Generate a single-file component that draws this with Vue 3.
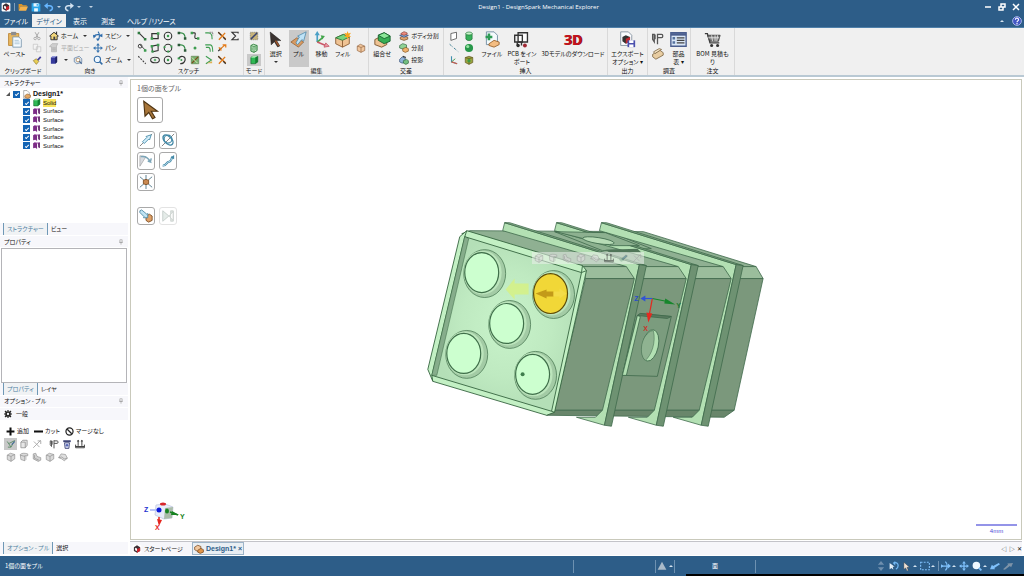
<template>
    <svg class="sprite" aria-hidden="true">
        <symbol id="logo" viewBox="0 0 16 16"><rect x="1" y="1" width="14" height="14" rx="2" fill="#fff" /><path d="M8 2l5 3v6l-5 3-5-3V5z" fill="#3d3036" /><path d="M8 8l5-2v5l-5 3z" fill="#c9232d" /><path d="M5 6l3 1v4l-3-1z" fill="#fff" /></symbol>
        <symbol id="folder" viewBox="0 0 16 16"><path d="M1 3h5l2 2h6v2H4l-3 6z" fill="#d9952b" /><path d="M4 7h12l-3 7H1z" fill="#f6b24b" /></symbol>
        <symbol id="save" viewBox="0 0 16 16"><path d="M1 2h12l2 2v11H1z" fill="#28a5ea" /><path d="M4 2h8v5H4zM5 10h6v5H5z" fill="#e8f6ff" /><path d="M9 3h2v3H9z" fill="#28a5ea" /></symbol>
        <symbol id="undo" viewBox="0 0 16 16"><path d="M3 6h6c6 0 6 7 0 8" fill="none" stroke="#67b6ff" stroke-width="2.4" /><path d="M6 1v10L0 6z" fill="#67b6ff" /></symbol>
        <symbol id="redo" viewBox="0 0 16 16"><path d="M12 6H7c-6 0-6 7 0 8" fill="none" stroke="#d3e2f0" stroke-width="2.4" /><path d="M10 1v10l6-5z" fill="#d3e2f0" /></symbol>
        <symbol id="paste" viewBox="0 0 18 20"><path d="M2 3h12v14H2z" fill="#e9b75d" stroke="#b98535" /><path d="M5 1h6v4H5z" fill="#8d8d8d" /><path d="M7 7h7l3 3v9H7z" fill="#f5fbff" stroke="#7896ac" /><path d="M9 11h5M9 13h6M9 15h6" stroke="#a5c0d3" /></symbol>
        <symbol id="cut" viewBox="0 0 16 16"><path d="M5 2l5 9M11 2L6 11" stroke="#aaa" stroke-width="1.6" /><circle cx="5" cy="12" r="2" fill="none" stroke="#aaa" stroke-width="1.5" /><circle cx="11" cy="12" r="2" fill="none" stroke="#aaa" stroke-width="1.5" /></symbol>
        <symbol id="copy" viewBox="0 0 16 16"><path d="M2 2h7v8H2zM7 6h7v8H7z" fill="#f4f4f4" stroke="#bdbdbd" /></symbol>
        <symbol id="brush" viewBox="0 0 16 16"><path d="M2 9l5-3 4 4-4 5z" fill="#e8cf55" stroke="#8a7430" /><path d="M8 7l5-5 2 2-5 5z" fill="#49459b" /></symbol>
        <symbol id="home" viewBox="0 0 16 16"><path d="M1 8l7-6 7 6h-2v6H3V8z" fill="#f3d77b" stroke="#333" stroke-width="1.5" /><path d="M7 9h3v5H7z" fill="#444" /><path d="M11 1h2v4h-2z" fill="#333" /></symbol>
        <symbol id="plan" viewBox="0 0 16 16"><path d="M2 4l3-3h9l-2 4v9H4V6H1z" fill="#cfcfcf" stroke="#aaa" /><path d="M5 8h6M5 11h6" stroke="#999" /></symbol>
        <symbol id="cubeBlue" viewBox="0 0 16 16"><path d="M3 4l3-2h7v9l-3 3H3z" fill="#353a9c" /><path d="M3 4l3-2h7l-3 2z" fill="#a5abe8" /><path d="M10 4l3-2v9l-3 3z" fill="#1d215f" /></symbol>
        <symbol id="viewer" viewBox="0 0 16 16"><path d="M2 5l8-3 4 4v6l-8 2-4-3z" fill="#d9e6f2" stroke="#4c6a92" /><circle cx="8" cy="8" r="3" fill="#fff" stroke="#a06a28" /><path d="M10 10l4 4" stroke="#4c6a92" stroke-width="2" /></symbol>
        <symbol id="spin" viewBox="0 0 16 16"><path d="M8 1c3 3 3 11 0 14M1 9c3-4 10-4 13-1" fill="none" stroke="#2e6cab" stroke-width="1.8" /><path d="M15 4v6l-5-2zM0 6l5 2-4 4zM5 12h5l-3 4z" fill="#2e6cab" /></symbol>
        <symbol id="pan" viewBox="0 0 16 16"><path d="M8 2v12M2 8h12" stroke="#3c77b1" stroke-width="1.8" /><path d="M8 0l3 4H5zM8 16l-3-4h6zM0 8l4-3v6zM16 8l-4 3V5z" fill="#3c77b1" /></symbol>
        <symbol id="zoom" viewBox="0 0 16 16"><circle cx="7" cy="7" r="5" fill="#eef7ff" stroke="#336ca5" stroke-width="1.8" /><path d="M11 11l4 4" stroke="#336ca5" stroke-width="2.4" /></symbol>
        <symbol id="line" viewBox="0 0 16 16"><path d="M3 3l10 10" stroke="#333" stroke-width="1.7" /><path d="M1 1h4v4H1zM11 11h4v4h-4z" fill="#2f7a40" /></symbol>
        <symbol id="rect" viewBox="0 0 16 16"><path d="M3 4h10v8H3z" fill="none" stroke="#333" stroke-width="2" /><path d="M1 10h4v4H1zM11 2h4v4h-4z" fill="#3d9d50" /></symbol>
        <symbol id="circle" viewBox="0 0 16 16"><circle cx="8" cy="8" r="6" fill="none" stroke="#333" stroke-width="1.8" /><circle cx="8" cy="8" r="2" fill="#3d9d50" /></symbol>
        <symbol id="arcT" viewBox="0 0 16 16"><path d="M2 3h4c5 0 7 4 7 9" fill="none" stroke="#2f8a43" stroke-width="1.8" /><path d="M1 1h4v4H1zM11 10h4v4h-4z" fill="#2b5a38" /></symbol>
        <symbol id="spline" viewBox="0 0 16 16"><path d="M2 3h5c4 0-2 8 2 9h5" fill="none" stroke="#333" stroke-width="1.7" /><path d="M1 1h4v4H1zM11 10h4v4h-4z" fill="#3d9d50" /></symbol>
        <symbol id="fillet" viewBox="0 0 16 16"><path d="M2 3h5c5 0 6 3 6 10" fill="none" stroke="#3d9d50" stroke-width="1.8" /><path d="M9 2h5v5" fill="none" stroke="#333" stroke-dasharray="2 1" /></symbol>
        <symbol id="trim" viewBox="0 0 16 16"><path d="M2 2l12 11M13 3L3 14" stroke="#e37c1b" stroke-width="2.2" /><path d="M2 2l5 5M10 10l4 4" stroke="#333" stroke-width="1.8" /></symbol>
        <symbol id="sigma" viewBox="0 0 16 16"><path d="M13 4V2H3l6 6-6 6h10v-2" fill="none" stroke="#333" stroke-width="1.7" /></symbol>
        <symbol id="tangent" viewBox="0 0 16 16"><circle cx="5" cy="5" r="3" fill="none" stroke="#444" stroke-width="1.6" /><path d="M4 2l10 10" stroke="#444" stroke-width="1.6" /><path d="M11 10h4v4h-4z" fill="#3d9d50" /></symbol>
        <symbol id="rect3" viewBox="0 0 16 16"><path d="M3 5l10-2v9L4 14z" fill="none" stroke="#333" stroke-width="1.7" /><path d="M1 3h4v4H1zM2 12h4v3H2zM11 1h4v4h-4z" fill="#3d9d50" /></symbol>
        <symbol id="circle3" viewBox="0 0 16 16"><circle cx="8" cy="8" r="6" fill="none" stroke="#333" stroke-width="1.7" /><path d="M1 5h3v3H1zM12 4h3v3h-3zM7 12h3v3H7z" fill="#3d9d50" /></symbol>
        <symbol id="point" viewBox="0 0 16 16"><circle cx="8" cy="8" r="2.4" fill="#3d9d50" /></symbol>
        <symbol id="offset" viewBox="0 0 16 16"><path d="M2 3h8c3 0 4 2 4 11M3 7h4c2 0 3 2 3 7" fill="none" stroke="#3d9d50" stroke-width="1.7" /></symbol>
        <symbol id="extend" viewBox="0 0 16 16"><path d="M2 13l5-5" stroke="#333" stroke-width="2" /><path d="M6 9l7-6M9 3h5v4M3 7l4 5" stroke="#e37c1b" stroke-width="2" fill="none" /></symbol>
        <symbol id="dashed" viewBox="0 0 16 16"><path d="M2 2l12 12" stroke="#444" stroke-width="1.8" stroke-dasharray="3 2" /></symbol>
        <symbol id="ellipse" viewBox="0 0 16 16"><ellipse cx="8" cy="8" rx="7" ry="4.5" fill="none" stroke="#333" stroke-width="1.7" /><path d="M6 8h4M8 6v4" stroke="#3d9d50" stroke-width="1.5" /></symbol>
        <symbol id="arcC" viewBox="0 0 16 16"><path d="M3 5c3-5 11-3 10 3-1 4-4 6-8 6" fill="none" stroke="#333" stroke-width="1.8" /><circle cx="7" cy="8" r="1.6" fill="#3d9d50" /><path d="M1 4h4v3H1z" fill="#3d9d50" /></symbol>
        <symbol id="project" viewBox="0 0 16 16"><path d="M2 2h12v12H2z" fill="#79af6c" stroke="#5b7f4e" /><path d="M3 13L13 3" stroke="#7b4a1b" stroke-width="2" /><path d="M3 4l9 9" stroke="#d7eabf" stroke-width="1.5" /></symbol>
        <symbol id="bend" viewBox="0 0 16 16"><path d="M3 2l9 6-9 6" fill="none" stroke="#3d9d50" stroke-width="1.7" /><path d="M4 13l9-3v3z" fill="#dfb153" /></symbol>
        <symbol id="modeSketch" viewBox="0 0 16 16"><path d="M2 2h12v12H2z" fill="#c7b37a" stroke="#777" stroke-dasharray="2 1" /><path d="M3 13L13 3" stroke="#39436f" stroke-width="2.4" /></symbol>
        <symbol id="modeSection" viewBox="0 0 16 16"><path d="M3 4l4-2 6 2v8l-5 3-5-2z" fill="#bfe6c2" stroke="#2a7b37" stroke-width="1.4" /><path d="M3 4l5 2 5-2M8 6v9M5 7v5M11 6v5" stroke="#2a7b37" fill="none" /></symbol>
        <symbol id="solid" viewBox="0 0 16 16"><path d="M3 4l3-2h8v9l-4 3H3z" fill="#2fb854" stroke="#0f6327" /><path d="M3 4l3-2h8l-4 2z" fill="#d4ffd5" /><path d="M10 4l4-2v9l-4 3z" fill="#147f30" /></symbol>
        <symbol id="cursor" viewBox="0 0 16 16"><path d="M3 1l10 8H9l3 5-2 1-3-5-3 3z" fill="#3a3330" stroke="#1f1a18" stroke-width=".5" /><path d="M8 9l3 5" stroke="#a35529" stroke-width="1.3" /></symbol>
        <symbol id="cursorGold" viewBox="0 0 16 16"><path d="M3 1l11 8H9l3 5-2 1-3-5-3 3z" fill="#a8763a" stroke="#4f3412" stroke-width=".9" /></symbol>
        <symbol id="pull" viewBox="0 0 20 20"><path d="M1 13l7-5 8 5-6 6z" fill="#d79a62" stroke="#8d5a2c" stroke-width=".8" /><path d="M7 14l4-7-2-1 10-5-3 11-2-2-5 6z" fill="#bfe3f7" stroke="#4a86a8" stroke-width=".9" /></symbol>
        <symbol id="move" viewBox="0 0 20 20"><path d="M5 13V3" stroke="#4ba0c6" stroke-width="2" /><path d="M5 0l3 5H2z" fill="#4ba0c6" /><path d="M5 13l6-5" stroke="#43a54b" stroke-width="2" /><path d="M9 5l5 1-3 4z" fill="#43a54b" /><path d="M5 13l10 4" stroke="#c9596a" stroke-width="2" /><path d="M19 18l-6 1 2-5z" fill="#e79aa5" stroke="#c9596a" /></symbol>
        <symbol id="fill" viewBox="0 0 20 20"><path d="M2 8l9-4 7 3v8l-8 4-8-4z" fill="#efc394" stroke="#85562d" /><path d="M2 8l9-4 7 3-8 4z" fill="#77d57e" stroke="#25773a" /><path d="M10 11v8" stroke="#85562d" /><path d="M16 0l1 3 3-1-2 3 2 2-3 0-1 3-1-3-3 0 2-2-2-3 3 1z" fill="#f8a51e" /></symbol>
        <symbol id="box" viewBox="0 0 16 16"><path d="M2 5l5-3 7 3v7l-6 3-6-3z" fill="#f1c79e" stroke="#8c5d38" /><path d="M2 5l6 2 6-2M8 7v8" fill="none" stroke="#8c5d38" /></symbol>
        <symbol id="combine" viewBox="0 0 20 20"><path d="M1 10l6-3 8 3v6l-6 3-8-3z" fill="#efc394" stroke="#754c22" /><path d="M5 5l7-3 7 4v6l-7 3-7-4z" fill="#37ae55" stroke="#155f2a" /><path d="M5 5l7-3 7 4-7 3z" fill="#8be698" stroke="#155f2a" /></symbol>
        <symbol id="splitBody" viewBox="0 0 16 16"><path d="M2 10l5-2 7 2v3l-6 2-6-2z" fill="#e0a56f" stroke="#654321" /><path d="M1 7l7-2 7 2-7 3z" fill="#7cb8e8" stroke="#336" /><path d="M3 4l5-3 5 2v2l-5 2-5-2z" fill="#ee8b7e" stroke="#7c3a33" /></symbol>
        <symbol id="split" viewBox="0 0 16 16"><path d="M1 4l5-3 6 2v5l-5 2-6-2z" fill="#8fd295" stroke="#285f36" /><path d="M6 9l5-2 4 2v4l-5 2-4-2z" fill="#f0b26c" stroke="#7c501e" /></symbol>
        <symbol id="projectTo" viewBox="0 0 16 16"><path d="M1 7l4-4 5 2v6l-5 2-4-2z" fill="#8fb3d9" stroke="#2b4770" /><path d="M7 9l5-2 3 2v4l-4 2-4-2z" fill="#74bf80" stroke="#285f36" /><path d="M6 2l5 2" stroke="#333" stroke-width="2" /></symbol>
        <symbol id="plane" viewBox="0 0 16 16"><path d="M3 4l9-2v10l-9 3z" fill="#fff" stroke="#444" stroke-width="1.2" /></symbol>
        <symbol id="cyl" viewBox="0 0 16 16"><path d="M3 4v9c2 3 8 3 10 0V4z" fill="#38b05a" stroke="#176b2e" /><ellipse cx="8" cy="4" rx="5" ry="2.4" fill="#c8f6ca" stroke="#176b2e" /></symbol>
        <symbol id="centerline" viewBox="0 0 16 16"><path d="M1 2l14 12" stroke="#367a8e" stroke-width="1.5" stroke-dasharray="4 2 1 2" /></symbol>
        <symbol id="sphere" viewBox="0 0 16 16"><circle cx="8" cy="8" r="6.5" fill="#27974a" /><circle cx="6" cy="5.5" r="2.5" fill="#98e3a4" /></symbol>
        <symbol id="origin" viewBox="0 0 16 16"><path d="M4 2v9l9 3" fill="none" stroke="#3e8fae" stroke-width="1.8" /><path d="M4 11l6-5" stroke="#3f9b4e" stroke-width="1.5" /><path d="M4 11l9 3" stroke="#cb5c4b" stroke-width="1.8" /></symbol>
        <symbol id="shell" viewBox="0 0 16 16"><path d="M2 4l6-2 6 2v8l-6 3-6-3z" fill="#9aa33f" stroke="#58501b" /><path d="M2 4l6 2 6-2M8 6v9" stroke="#58501b" fill="none" /><circle cx="8" cy="9" r="2.5" fill="#3c9b45" /></symbol>
        <symbol id="file" viewBox="0 0 20 20"><path d="M4 1h9l4 4v11H4z" fill="#f5fafd" stroke="#67879c" /><path d="M7 3v8M3 7h8" stroke="#2e9b56" stroke-width="3" /><path d="M7 15l6-4 6 2v3l-6 3-6-2z" fill="#f4bd82" stroke="#95602c" /></symbol>
        <symbol id="pcb" viewBox="0 0 20 20"><path d="M6 2h11v11H6z" fill="#fff" stroke="#333" stroke-width="1.6" /><path d="M2 5h9v8H2zM5 13v4M10 13v4" fill="none" stroke="#333" stroke-width="1.6" /><circle cx="6" cy="17" r="2" fill="#2d2d2d" /><circle cx="14" cy="17" r="2.3" fill="#9e2732" /></symbol>
        <symbol id="export" viewBox="0 0 20 20"><path d="M2 1h9l4 4v12H2z" fill="#fbfdff" stroke="#7e8c99" /><path d="M8 5l5 2v5l-5 3-4-3V7z" fill="#333" /><path d="M8 9l5-2v5l-5 3z" fill="#c1272d" /><path d="M10 11h9v8h-9z" fill="#4b50ae" /><path d="M12 11h5v3h-5zM12 16h5v3h-5z" fill="#fff" /></symbol>
        <symbol id="caliper" viewBox="0 0 16 16"><path d="M2 3v6l2 3V3zM5 3v6M8 2v13M8 3h5c2 0 2 4 0 4H8" fill="none" stroke="#565656" stroke-width="1.6" /></symbol>
        <symbol id="mass" viewBox="0 0 16 16"><path d="M2 9l9-5 4 3v3l-9 5-4-3z" fill="#e8cda2" stroke="#7b6543" /><path d="M3 6l7-4 3 1-8 5z" fill="#f6e5c5" stroke="#7b6543" /></symbol>
        <symbol id="bom" viewBox="0 0 20 20"><path d="M1 2h18v16H1z" fill="#d9e6f6" stroke="#4b5e8e" stroke-width="1.6" /><path d="M1 4h18" stroke="#4b5e8e" stroke-width="3" /><path d="M8 8h9M8 11h9M8 14h9" stroke="#444" stroke-width="1.4" /><path d="M3 7h3v3H3zM3 12h3v3H3z" fill="#55729e" /></symbol>
        <symbol id="cart" viewBox="0 0 20 20"><path d="M1 3h3l3 11h11" fill="none" stroke="#3c3c3c" stroke-width="1.5" /><path d="M4 5h15l-2 7H7z" fill="#7b7b7b" stroke="#3c3c3c" /><path d="M5 8h13M9 5l1 7M13 5v7M16 5l-1 7" stroke="#e9e9e9" /><circle cx="9" cy="17" r="1.8" fill="#333" /><circle cx="16" cy="17" r="1.8" fill="#333" /></symbol>
        <symbol id="help" viewBox="0 0 16 16"><circle cx="8" cy="8" r="7" fill="#4357c4" stroke="#b4bff0" stroke-width="1.4" /><path d="M5.5 6c0-4 5-3 5 0 0 2-2.5 1.500-2.5 4M8 11v2" fill="none" stroke="#fff" stroke-width="1.8" /></symbol>
        <symbol id="pin" viewBox="0 0 16 16"><path d="M5 2h6v7H5zM3 9h10M8 9v6" fill="none" stroke="#999" stroke-width="1.6" /></symbol>
        <symbol id="doc" viewBox="0 0 16 16"><path d="M3 1h6l4 4v10H3z" fill="#fff" stroke="#777" /><path d="M5 10l4-3 6 2v4l-5 2-5-2z" fill="#e5a864" stroke="#875a2d" /></symbol>
        <symbol id="part" viewBox="0 0 16 16"><path d="M1 5l5-3 5 2v5l-5 3-5-3z" fill="#f1c79e" stroke="#7a4a20" stroke-width="1.2" /><path d="M6 10l5-3 4 2v4l-5 2-4-2z" fill="#e0954a" stroke="#7a4a20" stroke-width="1.2" /></symbol>
        <symbol id="surface" viewBox="0 0 16 16"><path d="M2 4l3-2 4 1v11l-3-2-4 1z" fill="#7d2c86" /><path d="M9 3l5-1v11l-3-2V6z" fill="#5d1b67" /><path d="M5 2l4 1 5-1-4 3z" fill="#d298d8" /></symbol>
        <symbol id="dirPull" viewBox="0 0 16 16"><path d="M1 15L15 1" stroke="#777" /><path d="M4 10l5-5-1-1 6-2-2 6-1-1-5 5z" fill="#d5effb" stroke="#4389a7" /></symbol>
        <symbol id="revolve" viewBox="0 0 16 16"><path d="M1 15L15 1" stroke="#777" /><ellipse cx="8" cy="8" rx="7" ry="4" transform="rotate(45 8 8)" fill="none" stroke="#4389a7" stroke-width="1.7" /><circle cx="8" cy="7" r="4.5" fill="none" stroke="#4389a7" stroke-width="1.4" /></symbol>
        <symbol id="draft" viewBox="0 0 16 16"><path d="M1 2v12L8 3z" fill="#d8dbe0" stroke="#999" stroke-width=".7" /><path d="M2 3c6-1 9 2 11 6l-3-1M13 9l1-4" fill="none" stroke="#7ba5b8" stroke-width="1.7" /></symbol>
        <symbol id="sweep" viewBox="0 0 16 16"><path d="M2 13c4 1 4-4 7-4 2 0 3-3 4-6" fill="none" stroke="#4389a7" stroke-width="2.4" /><path d="M2 13c4 1 4-4 7-4 2 0 3-3 4-6" fill="none" stroke="#d5effb" stroke-width=".9" /><path d="M15 1v5l-4-2z" fill="#4389a7" /></symbol>
        <symbol id="scale" viewBox="0 0 16 16"><path d="M1 2l14 12M15 2L1 14M8 0v16" stroke="#5b7f91" stroke-width="1.1" /><path d="M5 6l3-1 3 1v4l-3 1-3-1z" fill="#ca8951" stroke="#7d4d22" /></symbol>
        <symbol id="upTo" viewBox="0 0 16 16"><path d="M8 8l4-2 3 2v5l-4 2-3-2z" fill="#dea169" stroke="#7d4d22" /><path d="M1 2l2-1 6 5 1-1v5H5l1-1-5-5z" fill="#bfe3f2" stroke="#3f7e9a" stroke-width=".9" /></symbol>
        <symbol id="finish" viewBox="0 0 16 16"><path d="M2 2v12l7-6z" fill="#e5ece9" stroke="#c4cdc9" /><path d="M14 3l-5 5 5 5zM11 2h3v12h-3z" fill="#dce3e0" stroke="#c8cfcc" stroke-width=".8" /></symbol>
        <symbol id="gear" viewBox="0 0 16 16"><circle cx="8" cy="8" r="4" fill="none" stroke="#222" stroke-width="3.4" /><path d="M8 0v3M8 13v3M0 8h3M13 8h3M2 2l3 3M11 11l3 3M14 2l-3 3M5 11l-3 3" stroke="#222" stroke-width="2.4" /></symbol>
        <symbol id="plus" viewBox="0 0 16 16"><path d="M8 1v14M1 8h14" stroke="#111" stroke-width="3.6" /></symbol>
        <symbol id="minus" viewBox="0 0 16 16"><path d="M0 8h16" stroke="#111" stroke-width="3.6" /></symbol>
        <symbol id="none" viewBox="0 0 16 16"><circle cx="8" cy="8" r="6.3" fill="none" stroke="#222" stroke-width="2.2" /><path d="M4 4l8 8" stroke="#222" stroke-width="2.2" /></symbol>
        <symbol id="optPull" viewBox="0 0 16 16"><path d="M2 4l6 9 6-11M5 7l8-4M3 13h5" fill="none" stroke="#5c8b66" stroke-width="1.5" /><path d="M9 9l5-5" stroke="#4b6f9d" stroke-width="1.7" /></symbol>
        <symbol id="optBox" viewBox="0 0 16 16"><path d="M3 5h7v9H3zM3 5l3-3h7v8l-3 4" fill="#e7e7e7" stroke="#949494" stroke-width="1.3" /></symbol>
        <symbol id="optArrow" viewBox="0 0 16 16"><path d="M2 14L14 2M3 4l9 9M9 3h5v5" fill="none" stroke="#a5a5a5" stroke-width="1.4" /></symbol>
        <symbol id="bin" viewBox="0 0 16 16"><path d="M2 2h12v3H2z" fill="#3f4576" /><path d="M4 6h8l-1 9H5z" fill="#d6dcf4" stroke="#3f4576" stroke-width="1.4" /><circle cx="8" cy="10" r="2" fill="#5867b4" /></symbol>
        <symbol id="ruler" viewBox="0 0 16 16"><path d="M1 9v5h14V9M5 2v9M11 2v9M1 12h14" fill="none" stroke="#383838" stroke-width="1.5" /><path d="M3 4l2-3 2 3zM9 4l2-3 2 3z" fill="#383838" /></symbol>
        <symbol id="grayBox" viewBox="0 0 16 16"><path d="M2 5l5-3 7 2v7l-6 4-6-3z" fill="#dadada" stroke="#8b8b8b" /><path d="M2 5l6 2 6-3M8 7v8" fill="none" stroke="#8b8b8b" /></symbol>
        <symbol id="grayRound" viewBox="0 0 16 16"><path d="M2 4c3-3 8-2 12-1v3H9v8l-6-2z" fill="#dadada" stroke="#8b8b8b" /><path d="M2 5l7 2M11 6v6l-2 2" fill="none" stroke="#8b8b8b" /></symbol>
        <symbol id="grayStep" viewBox="0 0 16 16"><path d="M2 3l4-1 2 5 6 2v4l-4 2-8-4z" fill="#d2d2d2" stroke="#8b8b8b" /><path d="M4 5v5l7 3" fill="none" stroke="#8b8b8b" /></symbol>
        <symbol id="grayDome" viewBox="0 0 16 16"><path d="M1 9l4-6 7 1 3 6-5 4-4-3z" fill="#dedede" stroke="#8b8b8b" /><path d="M1 9l5-1 4 3 5-1" fill="none" stroke="#8b8b8b" /></symbol>
        <symbol id="pick" viewBox="0 0 16 16"><path d="M1 10l5-2 4 4-5 2z" fill="#8db59a" /><path d="M6 9l7-6 2 2-7 6z" fill="#467f92" stroke="#333" stroke-width=".6" /></symbol>
        <symbol id="sbCursor" viewBox="0 0 16 16"><path d="M3 2l9 8H8l2 5-2 1-2-5-3 2z" fill="#f1e3d6" stroke="#333" stroke-width=".6" /></symbol>
        <symbol id="sbCursorBack" viewBox="0 0 16 16"><path d="M1 3l8 6H6l1 5-3-3-3 2z" fill="#e3edf5" /><path d="M9 3c7-2 7 8 2 10" fill="none" stroke="#72b7f2" stroke-width="2" /><path d="M10 0v7L6 3z" fill="#72b7f2" /></symbol>
        <symbol id="sbBox" viewBox="0 0 16 16"><path d="M1 2h14v12H1z" fill="none" stroke="#7fc0fa" stroke-width="1.8" stroke-dasharray="3 2" /></symbol>
        <symbol id="sbSpin" viewBox="0 0 16 16"><path d="M7 1c4 4 4 10 0 14M1 8h12" fill="none" stroke="#7fc0fa" stroke-width="2" /><path d="M16 8l-5 4V4zM0 5l4 3-4 3z" fill="#7fc0fa" /></symbol>
        <symbol id="sbPan" viewBox="0 0 16 16"><path d="M8 2v12M2 8h12" stroke="#7fc0fa" stroke-width="2" /><path d="M8 0l3 4H5zM8 16l-3-4h6zM0 8l4-3v6zM16 8l-4 3V5z" fill="#7fc0fa" /></symbol>
        <symbol id="sbZoom" viewBox="0 0 16 16"><circle cx="7" cy="7" r="6" fill="#eef8ff" /><path d="M11 11l4 4" stroke="#7fc0fa" stroke-width="3" /></symbol>
        <symbol id="sbPrev" viewBox="0 0 16 16"><path d="M0 13l3-7 2 2 9-5 2 2-9 6 1 2z" fill="#7fc0fa" /></symbol>
        <symbol id="sbNext" viewBox="0 0 16 16"><path d="M16 3l-3 7-2-2-8 6-3-1 8-7-1-2z" fill="#7d93a8" /></symbol>
        <symbol id="sbUpDown" viewBox="0 0 16 16"><path d="M8 0l5 6H3zM8 16l-5-6h10z" fill="#6f8fae" /></symbol>
        <symbol id="warn" viewBox="0 0 16 16"><path d="M8 1l7 13H1z" fill="#a9bac9" /></symbol>
    </svg>

    <div class="window">
        <header class="head">
            <div class="titlebar">
                <div class="quick">
                    <Icon name="logo" />
                    <i class="bar"></i>
                    <button aria-label="open"><Icon name="folder" /></button>
                    <button aria-label="save"><Icon name="save" /></button>
                    <button aria-label="undo"><Icon name="undo" /><i class="down"></i></button>
                    <button aria-label="redo"><Icon name="redo" /><i class="down"></i></button>
                    <button class="more" aria-label="customize"><i class="down"></i></button>
                </div>
                <h1>Design1 - DesignSpark Mechanical Explorer</h1>
                <div class="winbtns">
                    <button aria-label="minimize"><svg viewBox="0 0 8 8"><path d="M1 4h6" /></svg></button>
                    <button aria-label="restore"><svg viewBox="0 0 8 8"><path d="M3 1h4v3H3zM1 4h4v3H1z" /></svg></button>
                    <button aria-label="close"><svg viewBox="0 0 8 8"><path d="M1 1l6 6M7 1L1 7" /></svg></button>
                </div>
            </div>
            <nav class="menu">
                <button v-for="m in menus" :key="m" :class="{ active: m === activeMenu }" @click="activeMenu = m">{{ m }}</button>
                <span class="menu-right"><i class="up"></i><button aria-label="help"><Icon name="help" /></button></span>
            </nav>
        </header>

        <div class="ribbon">
            <section class="group g-clip">
                <div class="tools">
                    <BigButton icon="paste" :lines="['ペースト']" />
                    <div class="col"><button v-for="i in ['cut', 'copy', 'brush']" :key="i" :aria-label="i"><Icon :name="i" /></button></div>
                </div>
                <h2>クリップボード</h2>
            </section>
            <section class="group g-orient">
                <div class="tools">
                    <div class="col left">
                        <button><Icon name="home" />ホーム<i class="down"></i></button>
                        <button disabled><Icon name="plan" />平面ビュー</button>
                        <span class="pair"><button aria-label="view"><Icon name="cubeBlue" /><i class="down"></i></button><button aria-label="viewer"><Icon name="viewer" /></button></span>
                    </div>
                    <div class="col left">
                        <button><Icon name="spin" />スピン<i class="down"></i></button>
                        <button><Icon name="pan" />パン</button>
                        <button><Icon name="zoom" />ズーム<i class="down"></i></button>
                    </div>
                </div>
                <h2>向き</h2>
            </section>
            <section class="group g-sketch">
                <div class="tools sketch">
                    <template v-for="(s, i) in sketch" :key="i">
                        <button v-if="s" :aria-label="s"><Icon :name="s" /></button>
                        <span v-else></span>
                    </template>
                </div>
                <h2>スケッチ</h2>
            </section>
            <section class="group g-mode">
                <div class="tools">
                    <div class="col">
                        <button v-for="m in modes" :key="m" :aria-label="m" :class="{ on: m === mode }" @click="mode = m"><Icon :name="m" /></button>
                    </div>
                </div>
                <h2>モード</h2>
            </section>
            <section class="group g-edit">
                <div class="tools">
                    <BigButton icon="cursor" :lines="['選択']" arrow />
                    <BigButton icon="pull" :lines="['プル']" class="on" />
                    <BigButton icon="move" :lines="['移動']" />
                    <BigButton icon="fill" :lines="['フィル']" />
                    <div class="col mid"><button aria-label="box"><Icon name="box" /></button></div>
                </div>
                <h2>編集</h2>
            </section>
            <section class="group g-cross">
                <div class="tools">
                    <BigButton icon="combine" :lines="['組合せ']" />
                    <div class="col left">
                        <button><Icon name="splitBody" />ボディ分割</button>
                        <button><Icon name="split" />分割</button>
                        <button><Icon name="projectTo" />投影</button>
                    </div>
                </div>
                <h2>交差</h2>
            </section>
            <section class="group g-insert">
                <div class="tools">
                    <div class="shapes"><button v-for="s in shapes" :key="s" :aria-label="s"><Icon :name="s" /></button></div>
                    <BigButton icon="file" :lines="['ファイル']" />
                    <BigButton icon="pcb" :lines="['PCB をイン', 'ポート']" />
                    <button class="big"><b class="logo3d">3D</b><span>3Dモデルのダウンロード</span></button>
                </div>
                <h2>挿入</h2>
            </section>
            <section class="group g-out">
                <div class="tools"><BigButton icon="export" :lines="['エクスポート', 'オプション ▾']" /></div>
                <h2>出力</h2>
            </section>
            <section class="group g-survey">
                <div class="tools">
                    <div class="col two"><button aria-label="caliper"><Icon name="caliper" /></button><button aria-label="mass"><Icon name="mass" /></button></div>
                    <BigButton icon="bom" :lines="['部品', '表 ▾']" />
                </div>
                <h2>調査</h2>
            </section>
            <section class="group g-order">
                <div class="tools"><BigButton icon="cart" :lines="['BOM 見積も', 'り']" /></div>
                <h2>注文</h2>
            </section>
        </div>

        <div class="body">
            <aside class="side">
                <section class="panel">
                    <h3>ストラクチャー<Icon name="pin" /></h3>
                    <div class="structure">
                        <ul class="tree">
                            <li class="root"><i class="twist"></i><label><input type="checkbox" checked /><Icon name="doc" /><b>Design1*</b></label></li>
                            <li v-for="(n, i) in nodes" :key="i"><label><input type="checkbox" v-model="n.shown" /><Icon :name="n.icon" /><span :class="{ picked: n.icon === 'solid' }">{{ n.name }}</span></label></li>
                        </ul>
                    </div>
                    <div class="tabs"><button class="active">ストラクチャー</button><button>ビュー</button></div>
                </section>
                <section class="panel">
                    <h3>プロパティ<Icon name="pin" /></h3>
                    <div class="props"></div>
                    <div class="tabs"><button class="active">プロパティ</button><button>レイヤ</button></div>
                </section>
                <section class="panel">
                    <h3>オプション - プル<Icon name="pin" /></h3>
                    <h4><Icon name="gear" />一般</h4>
                    <div class="options">
                        <div class="row merge">
                            <button><Icon name="plus" />追加</button>
                            <button><Icon name="minus" />カット</button>
                            <button><Icon name="none" />マージなし</button>
                        </div>
                        <div class="row">
                            <button v-for="o in optionsA" :key="o" :aria-label="o" :class="{ on: o === 'optPull', gap: o === 'caliper' }"><Icon :name="o" /></button>
                        </div>
                        <div class="row">
                            <button v-for="(o, i) in optionsB" :key="i" :aria-label="o"><Icon :name="o" /></button>
                        </div>
                    </div>
                    <div class="tabs"><button class="active">オプション - プル</button><button>選択</button></div>
                </section>
            </aside>

            <main class="main">
                <div class="canvas">
                    <svg class="model" viewBox="131 80 891 460">
                        <g stroke="#3f6a4b" stroke-width=".8" stroke-linejoin="round">
                            <path d="M462 234L470 231 644 232 757 267 583 267z" fill="#8fb092" />
                            <path d="M583 267H757L764 279H586z" fill="#9bbd9c" />
                            <path d="M586 279H764L735 411H555z" fill="#7b987c" />
                            <path d="M555 411H735L725 418 547 416z" fill="#69866b" />
                            <path d="M555 232L612 233 652 249 603 251z" fill="#8db190" />
                            <g v-for="f in fins" :key="f.x" :transform="`translate(${f.x} 0)`">
                                <path d="M505 223L503 231 627 267 635 279 603 411 596 418 577 418 605 426 640 265z" fill="#b3e0b3" />
                                <path d="M505 223L510 223 647 266 640 265z" fill="#89b08b" />
                                <path d="M640 265L647 266 612 427 605 426z" fill="#6e9272" />
                            </g>
                            <path d="M556 232L606 233 640 246 612 246z" fill="#8db190" />
                            <ellipse cx="599" cy="241" rx="16" ry="3" transform="rotate(9 599 241)" fill="#b6dbb5" />
                            <path d="M606 250L638 249 642 253H610z" fill="#4f7558" stroke="none" />
                            <path d="M638 316L641 314 672 317 658 377 623 376z" fill="#7b9c7e" />
                            <path d="M638 316L641 317 627 376 623 376z" fill="#b3e0b3" />
                            <path d="M638 316L641 314 672 317 668 319z" fill="#5a7b60" />
                            <ellipse cx="651" cy="346" rx="8" ry="16" transform="rotate(12 651 346)" fill="#b3e0b3" />
                            <path d="M654 331C641 334 639 356 646 361 652 356 657 343 654 331z" fill="#8fb391" stroke-width=".5" />
                        </g>
                        <g stroke="#35633f" stroke-width=".9" stroke-linejoin="round">
                            <path d="M460 237L467 231 583 266 587 271 555 413 547 416 433 382 428 370z" fill="#c3f0c4" />
                            <path d="M465 237L582 273 552 412 432 376z" fill="url(#face)" />
                            <path d="M465 237L469 239 437 376 432 376z" fill="#86ad8b" stroke-width=".5" />
                            <path d="M467 231L465 237M583 266L582 273M433 382L432 376M555 413L552 412M582 273L587 271" fill="none" />
                        </g>
                        <g v-for="(b, i) in bosses" :key="i" stroke="#3f6f4a">
                            <ellipse :cx="b.x + 3" :cy="b.y + 1" rx="21" ry="24" fill="#a3cba5" stroke-width=".7" />
                            <ellipse :cx="b.x + 1" :cy="b.y" rx="19" ry="22" fill="#bce5bc" stroke="none" />
                            <ellipse :cx="b.x" :cy="b.y" rx="17" ry="20" :fill="b.hot ? '#f1d737' : '#ccffcf'" :stroke="b.hot ? '#5e4c08' : '#3f6f4a'" stroke-width="1.2" />
                        </g>
                        <circle cx="523" cy="375" r="2" fill="#3f7d4d" />
                        <path d="M506 290L515 279V284H529V295H515V300z" fill="#d8f27c" opacity=".75" />
                        <path d="M536 294L547 290V292H554V297H547V299z" fill="#c39a19" />
                        <path d="M554 292H560V289L567 294 560 299V297H554z" fill="#f4dc48" />
                        <g stroke-width="1.2">
                            <path d="M653 299L668 302" stroke="#16862c" /><path d="M666 299L676 305 665 304z" fill="#16862c" />
                            <path d="M653 299L650 315" stroke="#e32a20" /><path d="M647 313L653 314 649 323z" fill="#e32a20" />
                            <path d="M653 299H645" stroke="#3153d5" /><path d="M641 299L646 296V302z" fill="#3153d5" />
                        </g>
                        <g class="letters">
                            <text x="635" y="301" fill="#2b4cc8">Z</text>
                            <text x="644" y="332" fill="#c7352b">X</text>
                            <text x="677" y="308" fill="#1f7a31">Y</text>
                        </g>
                        <defs>
                            <radialGradient id="face"><stop offset="0" stop-color="#c8f3ca" /><stop offset=".6" stop-color="#bfeac1" /><stop offset="1" stop-color="#b4dfb7" /></radialGradient>
                        </defs>
                    </svg>

                    <div class="palette">
                        <p>1個の面をプル</p>
                        <button class="select" aria-label="select"><Icon name="cursorGold" /></button>
                        <div class="guides">
                            <button v-for="g in guides" :key="g" :aria-label="g"><Icon :name="g" /></button>
                        </div>
                        <div class="guides">
                            <button aria-label="upTo"><Icon name="upTo" /></button>
                            <button aria-label="finish" disabled><Icon name="finish" /></button>
                        </div>
                    </div>

                    <div class="minibar">
                        <button v-for="(m, i) in mini" :key="i" :aria-label="m"><Icon :name="m" /></button>
                    </div>

                    <svg class="triad" viewBox="0 0 44 32">
                        <path d="M13 6L22 5 30 8 29 19 21 20 12 16z" fill="#e8ecf9" stroke="#b9c1dc" stroke-width=".7" />
                        <path d="M22 9L30 8 29 19 21 20z" fill="#a9bba9" />
                        <ellipse cx="20" cy="5" rx="3" ry="1.5" fill="#d7262b" />
                        <path d="M7 11H14" stroke="#bac5f5" stroke-width="2" />
                        <circle cx="16" cy="11" r="2.5" fill="#0c19d8" />
                        <ellipse cx="24" cy="12" rx="2" ry="2.5" fill="#178322" />
                        <path d="M27 13L35 16" stroke="#178322" stroke-width="1.5" /><path d="M29 12L36 16 28 16z" fill="#178322" />
                        <path d="M16 18V22" stroke="#e5261e" stroke-width="1.5" /><path d="M14 20L19 21 16 27z" fill="#e5261e" />
                        <g class="letters"><text x="1" y="13" fill="#2333d0">Z</text><text x="37" y="20" fill="#178322">Y</text><text x="12" y="31" fill="#e5261e">X</text></g>
                    </svg>
                    <div class="scale">4mm</div>
                </div>
                <div class="docs">
                    <button><Icon name="logo" />スタートページ</button>
                    <button class="active"><Icon name="part" />Design1* <span>×</span></button>
                    <div class="docnav"><button aria-label="previous">◁</button><button aria-label="next">▷</button><button aria-label="close">✕</button></div>
                </div>
            </main>
        </div>

        <footer class="status">
            <span class="msg">1個の面をプル</span>
            <span class="cell progress"></span>
            <span class="cell alert"><Icon name="warn" /><i class="up"></i></span>
            <span class="cell pickinfo">面</span>
            <div class="cell nav">
                <button v-for="s in statusTools" :key="s.name" :aria-label="s.name" :class="{ sep: s.sep }"><Icon :name="s.name" /><i v-if="s.menu" class="up"></i></button>
            </div>
            <i class="black"></i>
        </footer>
    </div>
</template>

<script setup>
import { h, ref } from 'vue';

const Icon = (props) => h('svg', { class: 'icon', 'aria-hidden': 'true' }, [h('use', { href: '#' + props.name })]);
Icon.props = ['name'];

const BigButton = (props) => h('button', { class: 'big' }, [
    h(Icon, { name: props.icon }),
    ...props.lines.map((line) => h('span', line)),
    props.arrow !== undefined ? h('i', { class: 'down' }) : null
]);
BigButton.props = ['icon', 'lines', 'arrow'];

const menus = ['ファイル', 'デザイン', '表示', '測定', 'ヘルプ /リソース'];
const activeMenu = ref('デザイン');
const modes = ['modeSketch', 'modeSection', 'solid'];
const mode = ref('solid');

// three rows of eight, empty string leaves the cell blank
const sketch = [
    'line', 'rect', 'circle', 'arcT', 'spline', 'fillet', 'trim', 'sigma',
    'tangent', 'rect3', 'circle3', 'arcT', 'point', 'offset', 'extend', '',
    'dashed', 'ellipse', 'circle', 'arcC', 'project', 'bend', 'trim', ''
];
const shapes = ['plane', 'cyl', 'centerline', 'sphere', 'origin', 'shell'];

const nodes = ref([
    { name: 'Solid', icon: 'solid', shown: true },
    ...Array.from({ length: 5 }, () => ({ name: 'Surface', icon: 'surface', shown: true }))
]);

const optionsA = ['optPull', 'optBox', 'optArrow', 'caliper', 'bin', 'ruler'];
const optionsB = ['grayBox', 'grayRound', 'grayStep', 'grayBox', 'grayDome'];
const guides = ['dirPull', 'revolve', 'draft', 'sweep', 'scale'];
const mini = ['grayBox', 'grayRound', 'grayStep', 'grayBox', 'grayDome', 'ruler', 'pick', 'optArrow'];

// drawn back to front
const fins = [{ x: 97 }, { x: 52 }, { x: 0 }];
const bosses = [
    { x: 482, y: 273 },
    { x: 551, y: 294, hot: true },
    { x: 507, y: 324 },
    { x: 464, y: 354 },
    { x: 533, y: 375 }
];

const statusTools = [
    { name: 'sbUpDown' },
    { name: 'sbCursorBack' },
    { name: 'sbCursor', menu: true },
    { name: 'sbBox', menu: true },
    { name: 'sbSpin', menu: true, sep: true },
    { name: 'sbPan' },
    { name: 'sbZoom', menu: true },
    { name: 'sbPrev' },
    { name: 'sbNext' }
];
</script>

<style>
body {
    background: #fff;
}

.window .icon {
    width: 10px;
    height: 10px;
    flex: none;
    display: block;
}

.window .big {
    display: flex;
    flex-direction: column;
    align-items: center;
    padding: 1px 0 0;
    height: 37px;
    line-height: 8px;
    white-space: nowrap;
}

.window .big .icon {
    width: 17px;
    height: 17px;
    margin-bottom: 2px;
}

.window .down,
.window .up {
    display: inline-block;
    border: 2px solid transparent;
    border-bottom: 0;
    border-top-color: #333;
    flex: none;
}

.window .up {
    border-top: 0;
    border-bottom: 2px solid #d5e4f0;
}

.window .big .down {
    margin-top: 3px;
}
</style>

<style scoped>
.sprite {
    display: none;
}

.window {
    min-height: 100vh;
    display: flex;
    flex-direction: column;
    font-family: "Noto Sans CJK JP", sans-serif;
    font-feature-settings: "palt";
    font-size: 6px;
    line-height: 10px;
    color: #111;
    background: #fff;
}

button {
    font: inherit;
    font-feature-settings: inherit;
    color: inherit;
    border: 0;
    padding: 0;
    background: none;
    display: flex;
    align-items: center;
    white-space: nowrap;
}

h1, h2, h3, h4, p, ul {
    margin: 0;
    padding: 0;
    font-size: 6px;
    font-weight: normal;
}

.head {
    background: #2d5d88;
    color: #fff;
    height: 28px;
    box-sizing: border-box;
    border-bottom: 1px solid #4f80aa;
}

.titlebar {
    display: grid;
    grid-template-columns: auto 1fr auto;
    align-items: center;
    height: 13px;
}

.titlebar h1 {
    font-family: "Open Sans", sans-serif;
    text-align: center;
}

.quick {
    display: flex;
    align-items: center;
    gap: 3px;
    padding-left: 1px;
}

.quick .bar {
    width: 1px;
    height: 8px;
    background: #7f9fbc;
}

.quick button {
    gap: 3px;
}

.window .quick .down {
    border-top-color: #c3d3e2;
}

.more {
    padding-left: 5px;
}

.winbtns {
    display: flex;
    justify-content: flex-end;
    gap: 6px;
    padding-right: 4px;
}

.winbtns svg {
    width: 8px;
    height: 8px;
    fill: none;
    stroke: #fff;
    stroke-width: 1.5;
}

.menu {
    display: flex;
    height: 14px;
    padding-top: 1px;
    box-sizing: border-box;
}

.menu > button {
    justify-content: center;
    min-width: 28px;
    font-size: 7px;
}

.menu > button:first-child {
    min-width: 32px;
}

.menu > button:nth-child(2) {
    min-width: 34px;
}

.menu > button:nth-child(5) {
    padding: 0 5px;
}

.menu .active {
    background: #f0f0f0;
    color: #2d5d88;
}

.menu-right {
    margin-left: auto;
    display: flex;
    align-items: center;
    gap: 8px;
    padding-right: 2px;
}

.ribbon {
    display: flex;
    height: 47px;
    background: #f0f0f0;
    border-bottom: 2px solid #b9c9d4;
    overflow: hidden;
}

.group {
    flex: none;
    box-sizing: border-box;
    border-right: 1px solid #d9d9d9;
    padding-top: 2px;
}

.group h2 {
    text-align: center;
    line-height: 8px;
}

.tools {
    display: flex;
    justify-content: space-around;
    height: 37px;
}

.col {
    display: grid;
    grid-template-rows: repeat(3, 12px);
    justify-items: center;
    align-items: center;
}

.col.left {
    justify-items: start;
}

.col.mid {
    grid-template-rows: 36px;
}

.col.two {
    grid-template-rows: 16px 14px;
    align-content: start;
}

.window .col.two .icon {
    width: 13px;
    height: 13px;
}

.col button {
    gap: 2px;
}

.col button .down {
    margin-left: 3px;
}

.pair {
    display: flex;
    gap: 5px;
}

button:disabled {
    color: #aaa;
}

.col .on {
    background: #c9c9c9;
    padding: 1px 2px;
}

.big.on {
    background: #c9c9c9;
    width: 20px;
}

.g-clip { width: 47px; }
.g-orient { width: 87px; }
.g-sketch { width: 110px; }
.g-mode { width: 21px; }
.g-edit { width: 104px; }
.g-cross { width: 75px; }
.g-insert { width: 164px; }
.g-out { width: 40px; }
.g-survey { width: 43px; }
.g-order { width: 44px; }

.sketch {
    display: grid;
    grid-template-columns: repeat(8, 1fr);
    grid-template-rows: repeat(3, 12px);
    justify-items: center;
    align-items: center;
    padding: 0 1px;
}

.shapes {
    display: grid;
    grid-template-columns: 15px 15px;
    grid-template-rows: repeat(3, 12px);
    justify-items: center;
}

.logo3d {
    font: bold 14px/17px "Open Sans", sans-serif;
    color: #c3141d;
    text-shadow: 1px 0 #8c0d14;
    margin-bottom: 2px;
}

.body {
    flex: 1;
    display: flex;
    padding-bottom: 1px;
}

.side {
    width: 128px;
    flex: none;
    display: flex;
    flex-direction: column;
}

.panel {
    flex: 1 1 0;
    display: flex;
    flex-direction: column;
    padding-bottom: 1px;
}

.panel h3 {
    display: flex;
    justify-content: space-between;
    align-items: center;
    height: 11px;
    padding: 0 4px;
    background: #f7f7fb;
}

.window .panel h3 .icon {
    width: 6px;
    height: 6px;
}

.panel h4 {
    display: flex;
    align-items: center;
    gap: 4px;
    height: 12px;
    margin-top: 1px;
    padding-left: 4px;
    background: #f7f7fb;
}

.window .panel h4 .icon {
    width: 8px;
    height: 8px;
}

.structure {
    flex: 1;
    padding-top: 2px;
}

.tree {
    display: flex;
    flex-direction: column;
    justify-content: space-between;
    height: 60px;
    list-style: none;
    font-family: "Liberation Sans", sans-serif;
    font-size: 6px;
    line-height: 8px;
}

.tree b {
    font-size: 7px;
}

.tree li {
    display: flex;
    align-items: center;
    height: 8px;
    padding-left: 23px;
}

.tree .root {
    padding-left: 6px;
}

.tree label {
    display: flex;
    align-items: center;
    gap: 2px;
}

.window .tree .icon {
    width: 9px;
    height: 9px;
}

.twist {
    width: 0;
    height: 0;
    border-left: 4px solid transparent;
    border-bottom: 4px solid #555;
    margin-right: 3px;
}

.tree input {
    appearance: none;
    width: 7px;
    height: 7px;
    margin: 0;
    background: #1464b4;
    display: grid;
    place-items: center;
}

.tree input:checked::before {
    content: "";
    width: 3px;
    height: 1px;
    border-left: 1px solid #fff;
    border-bottom: 1px solid #fff;
    transform: rotate(-45deg);
}

.picked {
    background: #f8e45c;
}

.tabs {
    display: flex;
    height: 12px;
    background: #f7f7fb;
    padding-left: 3px;
}

.tabs button {
    padding: 0 3px;
}

.tabs .active {
    color: #4f7fa2;
    border-left: 1px solid #6f98b6;
    border-right: 1px solid #6f98b6;
    background: #f0f2f4;
}

.props {
    flex: 1;
    border: 1px solid #b4b4b8;
    margin: 1px 1px 0;
}

.options {
    flex: 1;
    padding: 5px 4px 0;
}

.row {
    display: flex;
    align-items: center;
    height: 13px;
}

.row button {
    justify-content: center;
    width: 13px;
    height: 12px;
}

.merge {
    gap: 5px;
    padding-left: 2px;
}

.merge button {
    width: auto;
    gap: 2px;
}

.window .merge .icon {
    width: 9px;
    height: 9px;
}

.row .on {
    background: #c8c8c8;
}

.row .gap {
    margin-left: 4px;
}

.main {
    flex: 1;
    min-width: 0;
    display: flex;
    flex-direction: column;
    padding: 2px 2px 0;
}

.canvas {
    flex: 1;
    position: relative;
    border: 1px solid #c9c9bb;
    background: #fff;
}

.model {
    position: absolute;
    inset: 0;
    width: 100%;
    height: 100%;
}

.letters {
    font: bold 7px "Liberation Sans", sans-serif;
}

.palette {
    position: relative;
    width: 60px;
    padding: 3px 6px;
}

.palette p {
    font-size: 7px;
    color: #666;
}

.palette button {
    justify-content: center;
    width: 18px;
    height: 18px;
    border: 1px solid #a9a9a9;
    border-radius: 3px;
    background: #fff;
}

.window .palette .icon {
    width: 14px;
    height: 14px;
}

.palette button:disabled {
    border-color: #e3e3e3;
}

.palette .select {
    width: 26px;
    height: 26px;
    margin: 4px 0 8px;
}

.window .palette .select .icon {
    width: 20px;
    height: 20px;
}

.guides {
    display: grid;
    grid-template-columns: 18px 18px;
    gap: 3px 4px;
    margin-bottom: 16px;
}

.minibar {
    position: absolute;
    left: 45%;
    top: 172px;
    display: flex;
    gap: 4px;
    padding: 1px 2px;
    background: rgba(235, 240, 235, .55);
}

.minibar button {
    opacity: .6;
}

.triad {
    position: absolute;
    left: 12px;
    bottom: 8px;
    width: 44px;
    height: 32px;
}

.scale {
    position: absolute;
    right: 4px;
    bottom: 3px;
    width: 41px;
    border-top: 2px solid #9494e8;
    text-align: center;
    font-family: "Liberation Sans", sans-serif;
    color: #4a4ad8;
}

.docs {
    display: flex;
    height: 14px;
    margin-top: 1px;
    background: #f6f6fa;
    border-top: 1px solid #c3c3c9;
    box-sizing: border-box;
}

.docs > button {
    gap: 2px;
    padding: 0 9px 0 2px;
}

.docs > .active {
    border: 1px solid #9db4c8;
    background: #e9eef3;
    color: #2d5d88;
    font-family: "Liberation Sans", sans-serif;
    font-size: 7px;
    font-weight: bold;
    padding: 0 1px;
}

.docnav {
    margin-left: auto;
    display: flex;
    gap: 2px;
}

.status {
    position: relative;
    display: flex;
    align-items: center;
    height: 20px;
    background: #2d5d88;
    color: #fff;
}

.msg {
    flex: 1;
    padding-left: 5px;
}

.cell {
    display: flex;
    align-items: center;
    height: 13px;
    border-left: 1px solid #6d91b1;
}

.progress {
    width: 81px;
}

.alert {
    gap: 2px;
    width: 18px;
    justify-content: center;
}

.pickinfo {
    width: 80px;
    justify-content: center;
}

.nav {
    width: 269px;
    box-sizing: border-box;
    padding-right: 11px;
    justify-content: flex-end;
    gap: 3px;
}

.nav button {
    gap: 1px;
}

.nav .sep {
    border-left: 1px solid #6d91b1;
    padding-left: 2px;
}

.black {
    position: absolute;
    right: 0;
    bottom: 0;
    width: 33%;
    height: 2px;
    background: #000;
}
</style>
